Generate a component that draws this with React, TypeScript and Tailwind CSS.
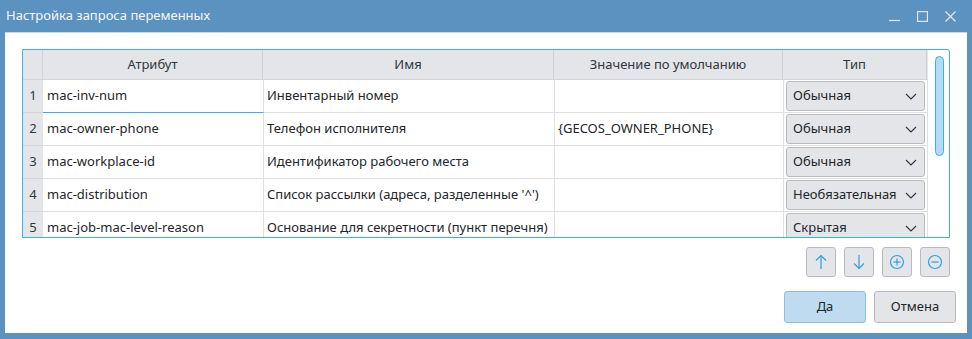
import React from "react";

const rows = [
  { n: 1, attr: "mac-inv-num", name: "Инвентарный номер", value: "", type: "Обычная" },
  { n: 2, attr: "mac-owner-phone", name: "Телефон исполнителя", value: "{GECOS_OWNER_PHONE}", type: "Обычная" },
  { n: 3, attr: "mac-workplace-id", name: "Идентификатор рабочего места", value: "", type: "Обычная" },
  { n: 4, attr: "mac-distribution", name: "Список рассылки (адреса, разделенные '^')", value: "", type: "Необязательная" },
  { n: 5, attr: "mac-job-mac-level-reason", name: "Основание для секретности (пункт перечня)", value: "", type: "Скрытая" },
];

function Chevron() {
  return (
    <svg width="12" height="7" viewBox="0 0 12 7" className="shrink-0">
      <polyline points="1,1 6,6 11,1" fill="none" stroke="#31363b" strokeWidth="1.1" />
    </svg>
  );
}

function Combo({ label }: { label: string }) {
  return (
    <div className="mx-[2px] my-[1px] h-[30px] flex items-center justify-between pl-[6px] pr-[7px] rounded-[3px] border border-[#b9bbbe] bg-[#e4e5e9]">
      <span>{label}</span>
      <Chevron />
    </div>
  );
}

function ToolButton({ children }: { children: React.ReactNode }) {
  return (
    <div className="w-[30px] h-[30px] flex items-center justify-center rounded-[3px] border border-[#b9bbbe] bg-[#e4e5e9]">
      {children}
    </div>
  );
}

const blue = "#2f9fe2";

export default function App() {
  return (
    <div className="w-[972px] h-[339px] bg-[#5b92bf] flex flex-col font-['Noto_Sans',sans-serif] text-[13px] text-[#232629]">
      {/* title bar */}
      <div className="h-[32px] shrink-0 flex items-center justify-between pl-[6px] pr-[16px] text-white">
        <span className="text-[13px] text-[#f4f8fb]">Настройка запроса переменных</span>
        <div className="flex items-center gap-[17px]">
          <svg width="11" height="11" viewBox="0 0 11 11">
            <line x1="0" y1="9.5" x2="11" y2="9.5" stroke="#dfe8f0" strokeWidth="1.2" />
          </svg>
          <svg width="11" height="11" viewBox="0 0 11 11">
            <rect x="0.6" y="0.6" width="9.8" height="9.8" fill="none" stroke="#dfe8f0" strokeWidth="1.2" />
          </svg>
          <svg width="11" height="11" viewBox="0 0 11 11">
            <line x1="0.5" y1="0.5" x2="10.5" y2="10.5" stroke="#dfe8f0" strokeWidth="1.2" />
            <line x1="10.5" y1="0.5" x2="0.5" y2="10.5" stroke="#dfe8f0" strokeWidth="1.2" />
          </svg>
        </div>
      </div>

      {/* content */}
      <div className="flex-1 mx-[5px] mb-[6px] bg-white border-t border-[#cdd5dc] flex flex-col">
        <div className="mx-[17px] mt-[16px] h-[189px] border border-[#3daee9] rounded-tr-[3px] flex overflow-hidden">
          <div className="w-[905px] flex flex-col">
            {/* header */}
            <div className="flex h-[30px] shrink-0 bg-[#e4e5e9] border-b border-[#d3d4d7] text-[#31363b]">
              <div className="w-[20px] border-r border-[#d3d4d7]" />
              <div className="w-[220px] border-r border-[#cfd0d3] flex items-center justify-center">Атрибут</div>
              <div className="w-[291px] border-r border-[#cfd0d3] flex items-center justify-center">Имя</div>
              <div className="w-[229px] border-r border-[#cfd0d3] flex items-center justify-center">Значение по умолчанию</div>
              <div className="w-[144px] border-r border-[#cfd0d3] flex items-center justify-center">Тип</div>
            </div>
            {rows.map((r) => (
              <div key={r.n} className="flex h-[33px] shrink-0">
                <div className="w-[20px] bg-[#e4e5e9] border-b border-[#d3d4d7] flex items-center justify-center text-[#31363b]">
                  {r.n}
                </div>
                <div
                  className={
                    r.n === 1
                      ? "w-[221px] border-r border-b border-r-[#e0e0e0] border-b-[#3daee9] flex items-center pl-[4px]"
                      : "w-[221px] border-r border-b border-[#e0e0e0] flex items-center pl-[4px]"
                  }
                >
                  {r.attr}
                </div>
                <div className="w-[291px] border-r border-b border-[#e0e0e0] flex items-center pl-[3px] whitespace-nowrap">
                  {r.name}
                </div>
                <div className="w-[229px] border-r border-b border-[#e0e0e0] flex items-center pl-[3px]">
                  {r.value}
                </div>
                <div className="w-[144px] border-r border-b border-[#e0e0e0]">
                  <Combo label={r.type} />
                </div>
              </div>
            ))}
          </div>
          {/* scrollbar */}
          <div className="w-[21px] flex justify-center pt-[6px] pl-[2px]">
            <div className="w-[9px] h-[100px] rounded-full border border-[#3daee9] bg-[#b3dcf4]" />
          </div>
        </div>

        {/* move buttons */}
        <div className="mx-[17px] mt-[9px] flex justify-end gap-[8px]">
          <ToolButton>
            <svg width="14" height="16" viewBox="0 0 14 16">
              <line x1="7" y1="1.5" x2="7" y2="15" stroke={blue} strokeWidth="1.2" />
              <polyline points="2,6.5 7,1.5 12,6.5" fill="none" stroke={blue} strokeWidth="1.2" />
            </svg>
          </ToolButton>
          <ToolButton>
            <svg width="14" height="16" viewBox="0 0 14 16">
              <line x1="7" y1="1" x2="7" y2="14.5" stroke={blue} strokeWidth="1.2" />
              <polyline points="2,9.5 7,14.5 12,9.5" fill="none" stroke={blue} strokeWidth="1.2" />
            </svg>
          </ToolButton>
          <ToolButton>
            <svg width="16" height="16" viewBox="0 0 16 16">
              <circle cx="8" cy="8" r="6.5" fill="none" stroke={blue} strokeWidth="1.2" />
              <line x1="4.5" y1="8" x2="11.5" y2="8" stroke={blue} strokeWidth="1.2" />
              <line x1="8" y1="4.5" x2="8" y2="11.5" stroke={blue} strokeWidth="1.2" />
            </svg>
          </ToolButton>
          <ToolButton>
            <svg width="16" height="16" viewBox="0 0 16 16">
              <circle cx="8" cy="8" r="6.5" fill="none" stroke={blue} strokeWidth="1.2" />
              <line x1="4.5" y1="8" x2="11.5" y2="8" stroke={blue} strokeWidth="1.2" />
            </svg>
          </ToolButton>
        </div>

        {/* dialog buttons */}
        <div className="mt-[14px] mr-[11px] flex justify-end gap-[8px]">
          <div className="w-[82px] h-[32px] flex items-center justify-center rounded-[3px] border border-[#8dbfe2] bg-[#bfdbef]">
            Да
          </div>
          <div className="w-[82px] h-[32px] flex items-center justify-center rounded-[3px] border border-[#b9bbbe] bg-[#e4e5e9]">
            Отмена
          </div>
        </div>
      </div>
    </div>
  );
}
